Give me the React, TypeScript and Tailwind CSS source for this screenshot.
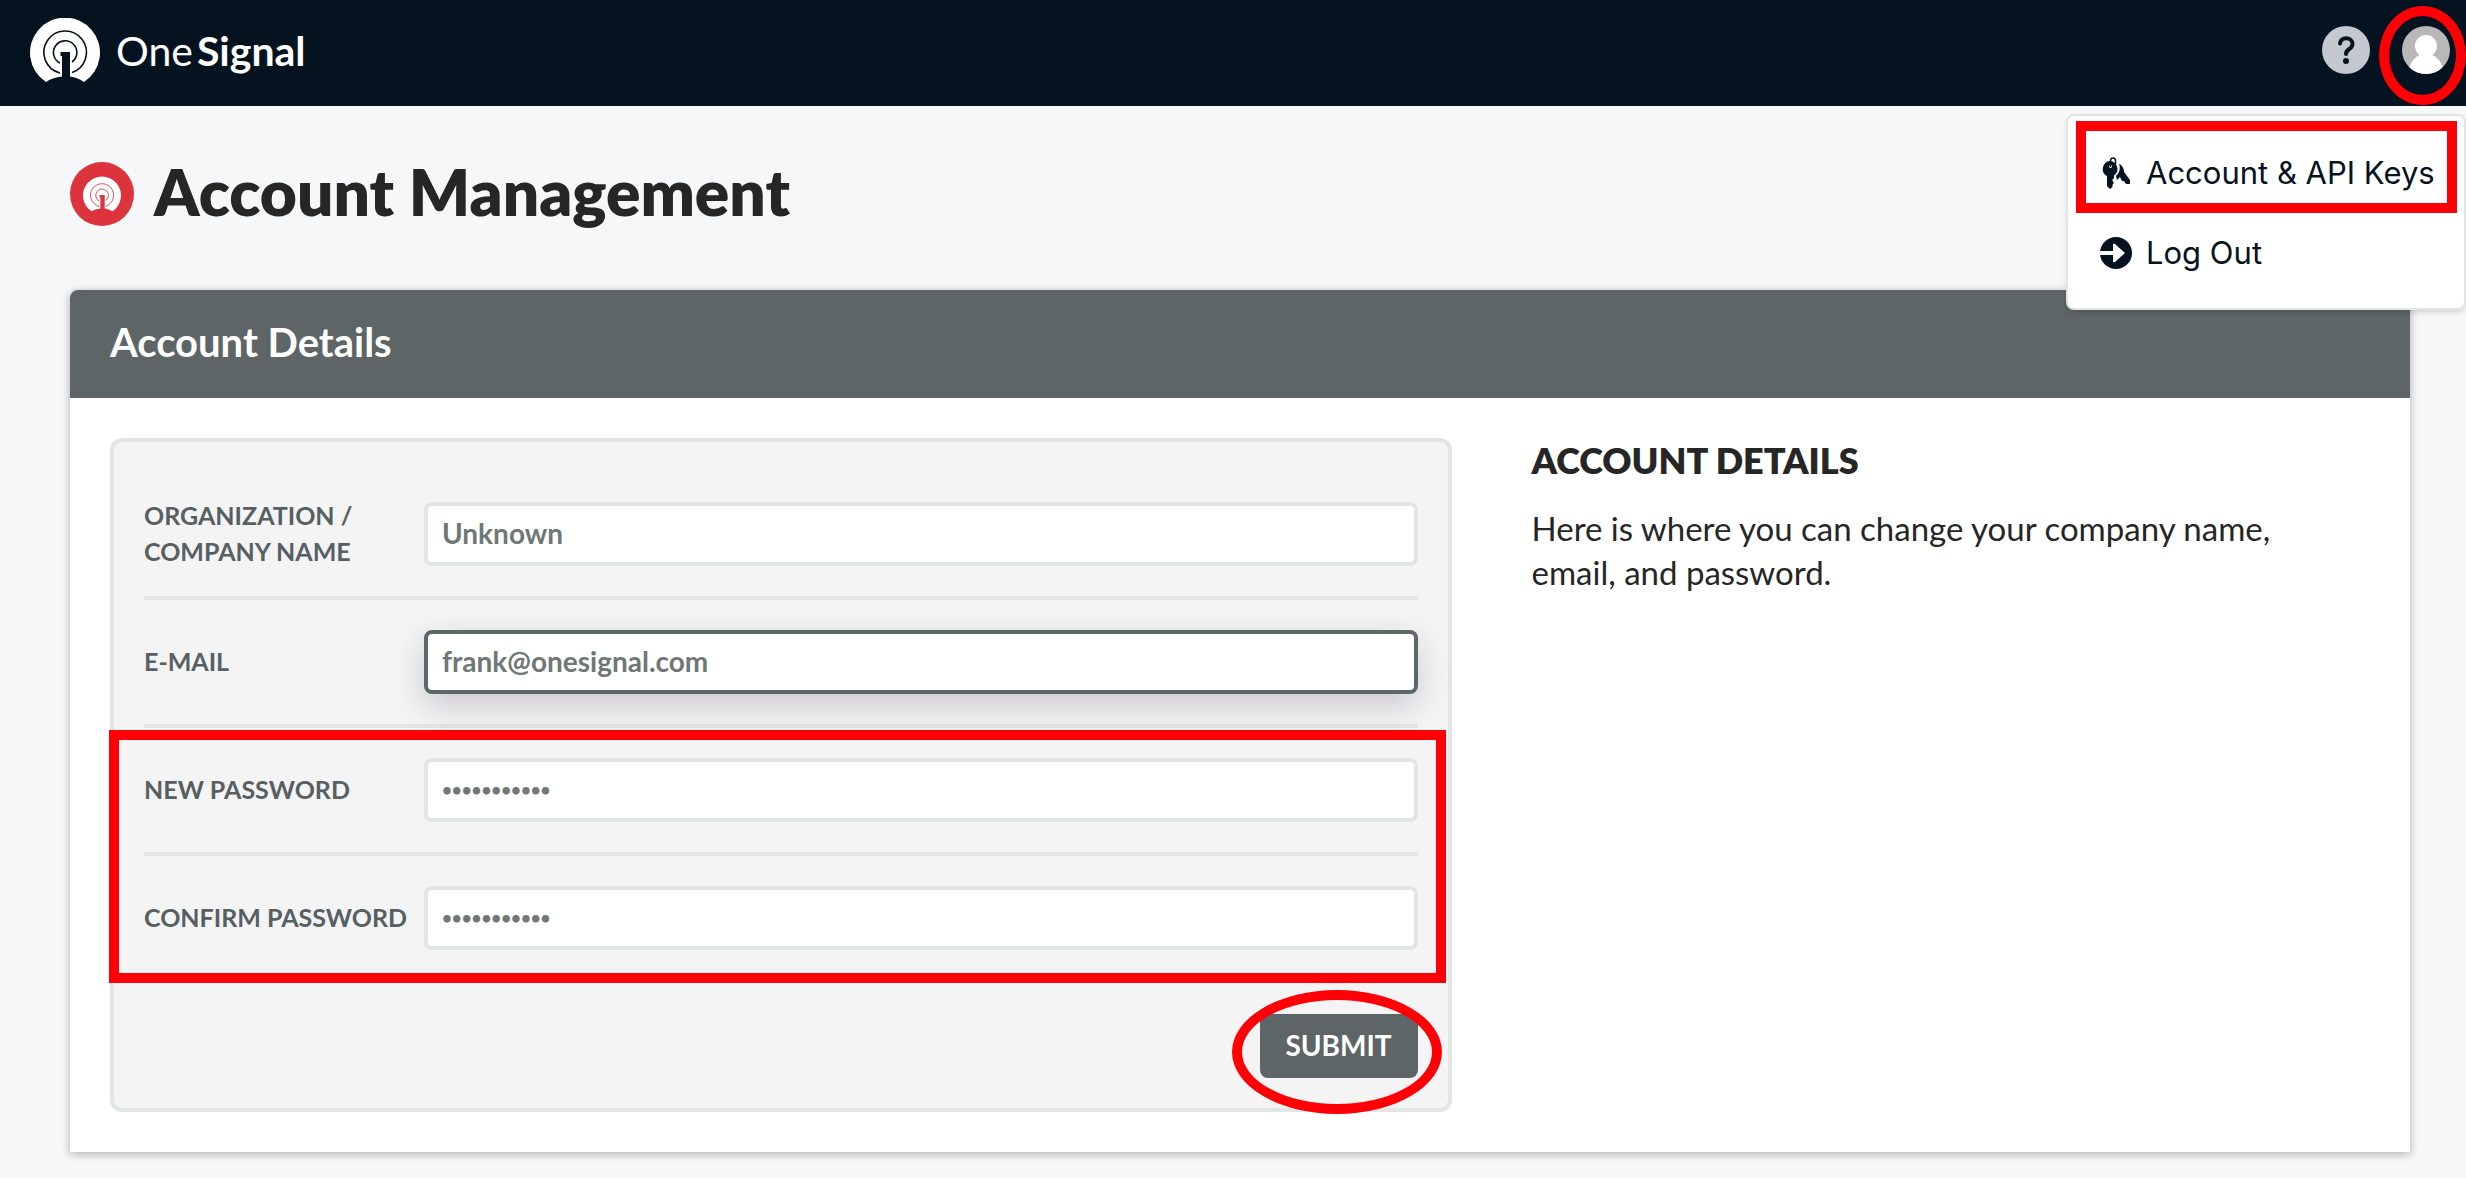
import type { ReactNode } from "react"

type FieldProps = {
   id: string
   label: ReactNode
   type: string
   placeholder: string
   active?: boolean
   last?: boolean
}

function SignalMark({ className }: { className: string }) {
   return (
      <svg viewBox="0 0 70 64" className={className} aria-hidden="true">
         <path
            fill="currentColor"
            d="M16 64 A35 35 0 1 1 54 64 Q48 59.500 40 58.500 V34 H30.500 V38 H32 V58.500 Q22 59.500 16 64 Z"
         />
         <g fill="none" className="stroke-(--mark)" strokeWidth="1.600">
            <path d="M30 55 A21.300 21.300 0 1 1 42 54.500" />
            <path d="M30 45 A11.700 11.700 0 1 1 42 44" />
         </g>
      </svg>
   )
}

function KeysIcon() {
   return (
      <svg viewBox="0 0 28 32" className="h-8 w-7" aria-hidden="true">
         <path fill="none" stroke="currentColor" strokeWidth="1.500" d="M8.500 10 V4 Q8.500 1 11 1 T13.500 4 V7" />
         <path
            fill="currentColor"
            fillRule="evenodd"
            d="M8 4 A8 8 0 0 0 5 19 V29 L8 32 L10.500 30 V27.500 L12 26 L10.500 24 V22.500 L12 21 V18.500 A8 8 0 0 0 8 4 Z M8.500 8 a1.500 1.500 0 1 0 .1 0 Z"
         />
         <path fill="currentColor" d="M17 7 C20 8 22 11 22 15 L28 23 V27 H24 L22 24 H20 L18 20 L15 23 L14 19 C18 15 18.500 11 17 7 Z" />
      </svg>
   )
}

function LogOutIcon() {
   return (
      <svg viewBox="0 0 32 32" className="size-8 shrink-0" aria-hidden="true">
         <circle cx="16" cy="16" r="16" fill="currentColor" />
         <path fill="#fff" d="M0 14 H13 V7 Q15 6 16 8 L25 16 L16 24 Q15 26 13 25 V18 H0 Z" />
      </svg>
   )
}

function Field({ id, label, type, placeholder, active, last }: FieldProps) {
   return (
      <div className={`flex items-center border-b-4 py-[30px] ${last ? "border-transparent" : "border-[#e1e5e5]"}`}>
         <label htmlFor={id} className="-my-2 w-[280px] shrink-0 pb-0.5 text-[25px] leading-9 font-bold text-[#566063] uppercase">
            {label}
         </label>
         <input
            id={id}
            type={type}
            placeholder={placeholder}
            className={`h-16 min-w-0 flex-1 rounded-lg border-4 bg-white px-[14px] pb-0.5 font-bold outline-none placeholder:text-[#6f7777] ${
               type === "password" ? "text-[17px]" : "text-[28px]"
            } ${active ? "border-[#5d6769] shadow-[0_12px_32px_rgba(40,30,60,0.2)]" : "border-[#e1e5e5]"}`}
         />
      </div>
   )
}

function Header() {
   return (
      <header className="relative flex h-[106px] items-center justify-between bg-[#051320] pr-4 pb-1.5 pl-[30px]">
         <a href="#" className="flex items-center gap-4 text-white [--mark:#051320]">
            <SignalMark className="h-16 w-[70px]" />
            <span className="text-[41px] leading-none">
               <span>One</span>
               <span className="ml-1 font-bold">Signal</span>
            </span>
         </a>

         <div className="flex items-center gap-8">
            <button aria-label="Help" className="size-12 rounded-full bg-[#c3c8d1]">
               <svg viewBox="0 0 48 48" fill="none" stroke="#051320" strokeWidth="4" strokeLinecap="round">
                  <path d="M18 17.500 C18 10.500 30.500 10.500 30.500 18 C30.500 23.500 24 22.500 24 28" />
                  <circle cx="24" cy="35" r="3" fill="#051320" stroke="none" />
               </svg>
            </button>
            <button aria-label="Account menu" className="relative size-12">
               <svg viewBox="0 0 48 48" className="size-12 rounded-full bg-[#b8b8b8]" fill="#fff">
                  <circle cx="24" cy="20" r="11" />
                  <path d="M7 43 C9 34 14 31 19 28 H29 C34 31 39 34 41 43 L36 48 H12 Z" />
               </svg>
               <span className="absolute -top-5 -right-4 h-[99px] w-[87px] rounded-[50%] border-10 border-[#ff0006]" />
            </button>
         </div>

         <nav className="absolute top-[114px] right-0 z-10 flex h-[196px] w-[400px] flex-col rounded-lg border-2 border-[#e1e5e5] bg-white pt-[17px] pr-5 pl-8 font-[Inter,sans-serif] text-[31px] text-[#051320] shadow-md">
            <a href="#" className="relative flex h-20 items-center gap-[14px]">
               <span className="flex w-8 shrink-0 justify-center"><KeysIcon /></span>
               <span className="whitespace-nowrap">Account &amp; API Keys</span>
               <span className="absolute -top-3 -right-[13px] -left-6 h-[92px] border-10 border-[#ff0006]" />
            </a>
            <a href="#" className="flex h-20 items-center gap-[14px]">
               <LogOutIcon />
               <span>Log Out</span>
            </a>
         </nav>
      </header>
   )
}

function App() {
   return (
      <div className="min-h-screen bg-[#f5f7f9] font-[Lato,sans-serif] text-[#262626]">
         <Header />

         <main className="pt-14 pr-14 pb-[26px] pl-[70px]">
            <div className="flex items-center gap-5">
               <span className="flex size-16 items-center justify-center rounded-full bg-[#dd333d] text-white [--mark:#dd333d]">
                  <SignalMark className="h-9 w-[38px]" />
               </span>
               <h1 className="-mt-1 text-[64px] leading-16 font-extrabold">Account Management</h1>
            </div>

            <section className="mt-16 rounded-t-lg bg-white shadow-[0_2px_10px_rgba(0,0,0,0.3)]">
               <h2 className="rounded-t-lg bg-[#5d6567] px-10 pb-1 text-[40px] leading-[104px] font-bold text-white">Account Details</h2>

               <div className="grid grid-cols-[8fr_5fr] gap-20 p-10">
                  <form className="rounded-xl border-4 border-[#e1e5e5] bg-[#f4f4f4] p-[30px]">
                     <Field id="company" label={<>Organization /<br />Company name</>} type="text" placeholder="Unknown" />
                     <Field id="email" label="E-mail" type="email" placeholder="frank@onesignal.com" active />
                     <div className="relative">
                        <Field id="password" label="New password" type="password" placeholder="•••••••••••" />
                        <Field id="confirm" label="Confirm password" type="password" placeholder="•••••••••••" last />
                        <div className="pointer-events-none absolute top-0.5 -right-7 bottom-px -left-[35px] border-10 border-[#ff0006]" />
                     </div>
                     <div className="mt-[30px] flex justify-end">
                        <button type="button" className="relative h-16 w-[158px] rounded-lg bg-[#5d6567] pb-0.5 text-[28px] font-bold text-white">
                           SUBMIT
                           <span className="absolute -top-6 -right-6 -left-7 h-[124px] rounded-[50%] border-10 border-[#ff0006]" />
                        </button>
                     </div>
                  </form>

                  <aside className="pr-10">
                     <h3 className="text-[36px] leading-11 font-extrabold">ACCOUNT DETAILS</h3>
                     <p className="mt-6 text-[33px] leading-11">
                        Here is where you can change your company name, email, and password.
                     </p>
                  </aside>
               </div>
            </section>
         </main>
      </div>
   )
}

export default App
